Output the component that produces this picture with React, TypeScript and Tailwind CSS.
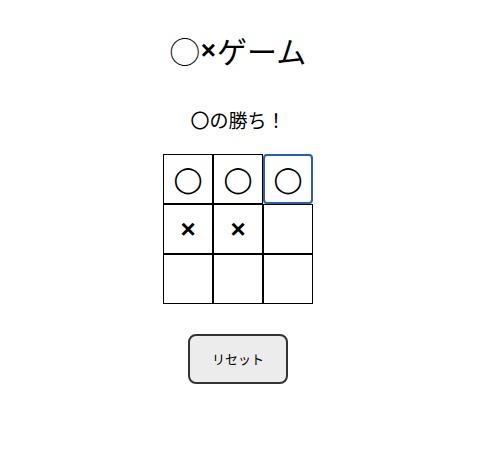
import React from 'react';

const cells: string[] = ['◯', '◯', '◯', '×', '×', '', '', '', ''];

const Cell: React.FC<{ value: string; focused?: boolean }> = ({ value, focused }) => (
  <div
    className={`w-[50px] h-[50px] flex items-center justify-center bg-white ${
      focused ? 'border-2 border-[#2a5bb5] rounded-[4px]' : 'border border-black'
    }`}
  >
    {value === '◯' && <span className="font-['DejaVu_Sans'] text-[26px] leading-none">◯</span>}
    {value === '×' && <span className="font-['Liberation_Sans'] text-[26px] leading-none font-bold">×</span>}
  </div>
);

export default function App() {
  return (
    <div
      className="w-[476px] flex flex-col items-center text-black bg-white"
      style={{ fontFamily: '"Noto Sans CJK JP", "Noto Sans", sans-serif' }}
    >
      <div className="mt-[30px] h-[40px] leading-[40px] text-[30px] flex items-center">
        <span>◯</span>
        <span className="font-['Liberation_Sans'] font-bold text-[26px] mx-[1px]">×</span>
        <span>ゲーム</span>
      </div>
      <div className="mt-[36px] h-[28px] leading-[28px] text-[19px]">〇の勝ち！</div>
      <div className="mt-[20px] grid grid-cols-3 w-[150px]">
        {cells.map((v, i) => (
          <Cell key={i} value={v} focused={i === 2} />
        ))}
      </div>
      <button className="mt-[30px] w-[100px] h-[50px] rounded-[8px] border-2 border-[#333] bg-[#ececec] text-[13px] text-black">
        リセット
      </button>
      <div className="h-[67px]" />
    </div>
  );
}
